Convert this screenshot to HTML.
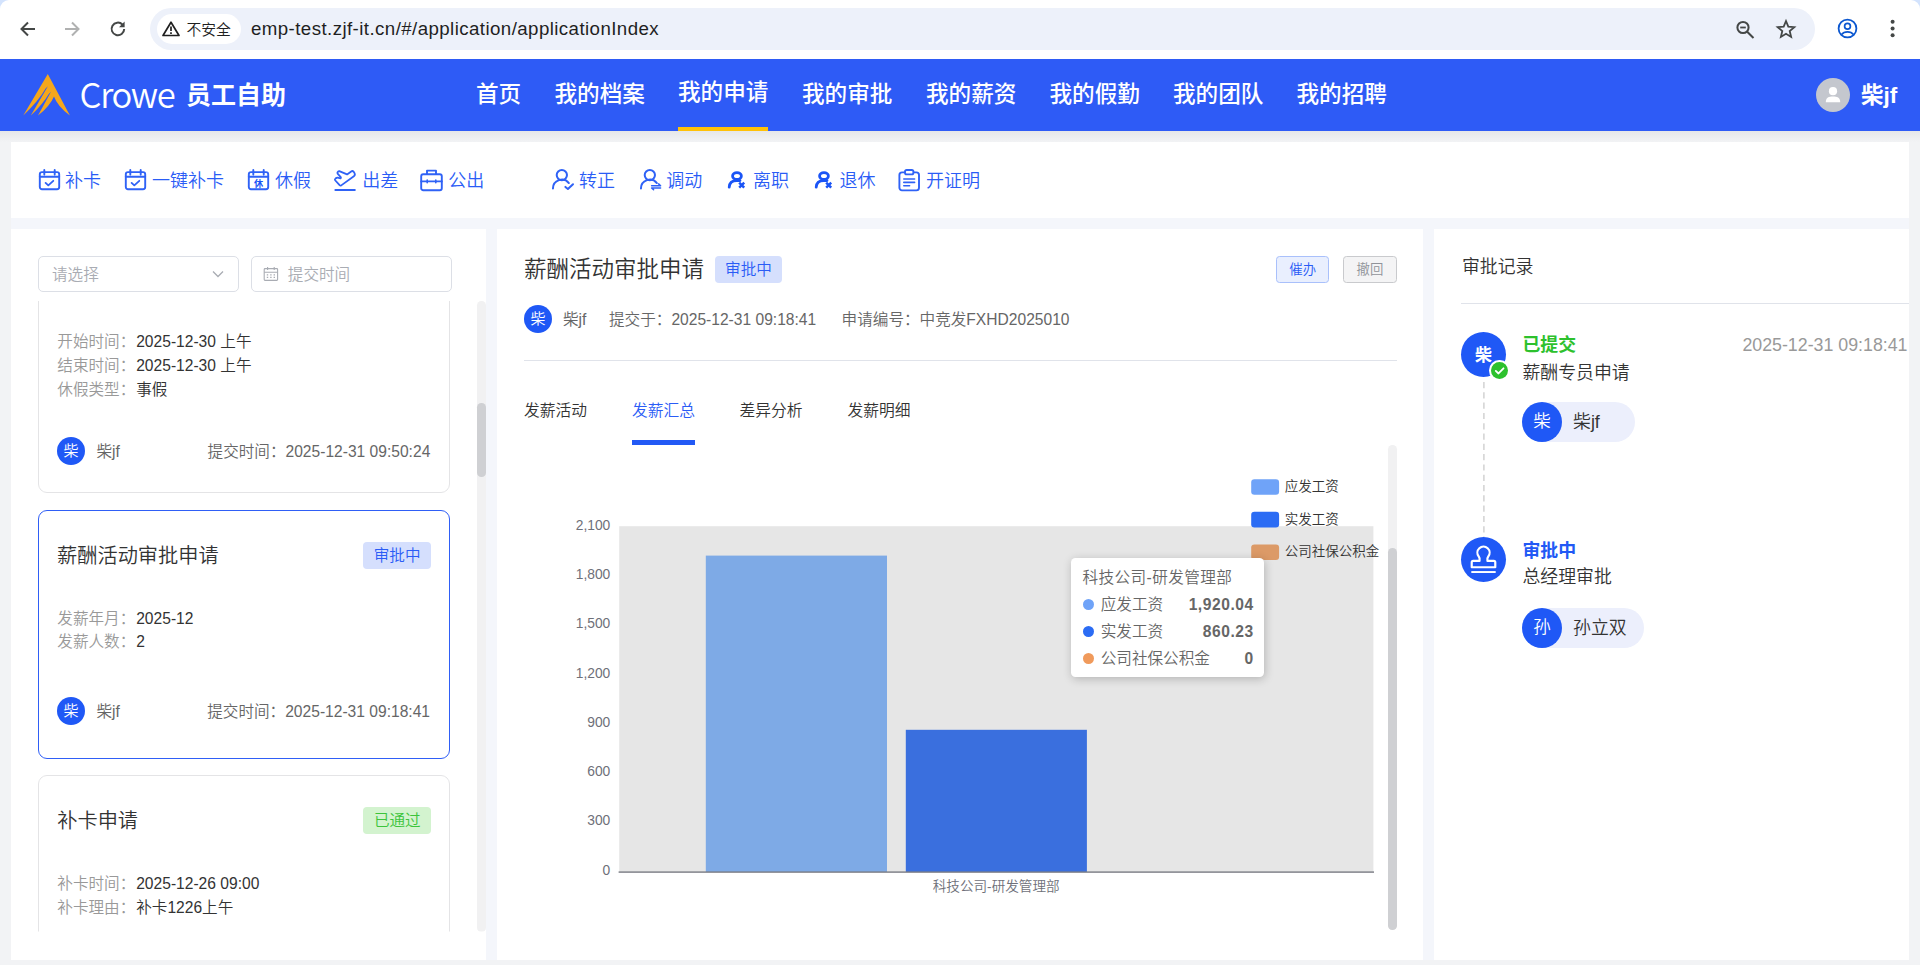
<!DOCTYPE html>
<html lang="zh-CN">
<head>
<meta charset="utf-8">
<title>员工自助</title>
<style>
*{box-sizing:border-box;margin:0;padding:0}
html,body{width:1920px;height:965px;overflow:hidden}
body{position:relative;background:#f2f3f5;font-family:"Liberation Sans","Noto Sans CJK SC",sans-serif;color:#333;font-size:15.6px;font-weight:350}
.abs{position:absolute}
.t{position:absolute;white-space:nowrap;line-height:1}
svg{position:absolute;overflow:visible}
/* browser chrome */
#chrome{position:absolute;left:0;top:0;width:1920px;height:59px;background:#fff;border-radius:9px 9px 0 0}
#urlbar{position:absolute;left:150px;top:8px;width:1665px;height:42px;border-radius:21px;background:#edf1fa}
#chip{position:absolute;left:157px;top:14px;width:84px;height:30px;border-radius:15px;background:#fff}
/* header */
#hdr{position:absolute;left:0;top:59px;width:1920px;height:72px;background:#2e5bf6}
#hdrshadow{position:absolute;left:0;top:131px;width:1920px;height:11px;background:linear-gradient(#e6e7e9,#f2f3f5)}
.nav{position:absolute;font-size:22.6px;color:#fff;white-space:nowrap;line-height:1;font-weight:500}
/* panels */
.panel{position:absolute;background:#fff}
.tool{position:absolute;top:171.6px;font-size:18px;color:#2a5cf6;line-height:1;white-space:nowrap}
.card{position:absolute;left:38px;width:412px;border:1px solid #e4e4e6;border-radius:9px;background:#fff}
.lbl{color:#999}
.g6{color:#666}
.av{position:absolute;border-radius:50%;background:#1f58f6;color:#fff;text-align:center}
.tag{position:absolute;border-radius:4px;text-align:center;font-size:15.6px}
</style>
</head>
<body>
<!-- ===== browser chrome ===== -->
<div class="abs" style="left:0;top:0;width:1920px;height:12px;background:#d3e3fd"></div>
<div id="chrome">
  <div id="urlbar"></div>
  <div id="chip"></div>
  <!-- back -->
  <svg style="left:19px;top:20px" width="18" height="18" viewBox="0 0 18 18"><path d="M16 9H3M9 2.5L2.5 9L9 15.5" fill="none" stroke="#444746" stroke-width="2" stroke-linejoin="miter"/></svg>
  <!-- forward -->
  <svg style="left:63px;top:20px" width="18" height="18" viewBox="0 0 18 18"><path d="M2 9H15M9 2.5L15.5 9L9 15.5" fill="none" stroke="#b0b1b1" stroke-width="2"/></svg>
  <!-- reload -->
  <svg style="left:108px;top:19px" width="20" height="20" viewBox="0 0 20 20"><path d="M16.2 10A6.3 6.3 0 1 1 14.4 5.5" fill="none" stroke="#444746" stroke-width="2"/><path d="M16.6 2.6V8.2H11z" fill="#444746"/></svg>
  <!-- warning -->
  <svg style="left:161px;top:20px" width="20" height="17" viewBox="0 0 20 17"><path d="M10 2.2L18 15.5H2z" fill="none" stroke="#1f1f1f" stroke-width="1.7" stroke-linejoin="round"/><path d="M10 6.5V11M10 12.3V14" stroke="#1f1f1f" stroke-width="1.7"/></svg>
  <div class="t" style="left:186.5px;top:23px;font-size:14.8px;color:#1f1f1f">不安全</div>
  <div class="t" id="url" style="left:251px;top:20px;font-size:18.7px;color:#1f1f1f;letter-spacing:0.42px">emp-test.zjf-it.cn/#/application/applicationIndex</div>
  <!-- zoom -->
  <svg style="left:1735px;top:19px" width="21" height="21" viewBox="0 0 21 21"><circle cx="8" cy="8.5" r="5.6" fill="none" stroke="#444746" stroke-width="2"/><path d="M12.2 12.7L18.5 19" stroke="#444746" stroke-width="2"/><path d="M5.2 8.5H10.8" stroke="#444746" stroke-width="1.8"/></svg>
  <!-- star -->
  <svg style="left:1775px;top:18px" width="22" height="22" viewBox="0 0 22 22"><path d="M11 3L13.3 8.6L19.3 9.1L14.7 13L16.1 18.9L11 15.7L5.9 18.9L7.3 13L2.7 9.1L8.7 8.6z" fill="none" stroke="#444746" stroke-width="1.8" stroke-linejoin="miter"/></svg>
  <!-- profile -->
  <svg style="left:1837px;top:18px" width="21" height="21" viewBox="0 0 21 21"><circle cx="10.5" cy="10.5" r="8.9" fill="none" stroke="#0b57d0" stroke-width="1.8"/><circle cx="10.5" cy="8.3" r="2.9" fill="none" stroke="#0b57d0" stroke-width="1.7"/><path d="M4.6 16.6C6 14.6 8 13.8 10.5 13.8S15 14.6 16.4 16.6" fill="none" stroke="#0b57d0" stroke-width="1.7"/></svg>
  <!-- kebab -->
  <svg style="left:1889px;top:18px" width="8" height="22" viewBox="0 0 8 22"><circle cx="3.6" cy="3.8" r="2" fill="#444746"/><circle cx="3.6" cy="10.6" r="2" fill="#444746"/><circle cx="3.6" cy="17.3" r="2" fill="#444746"/></svg>
</div>
<!-- ===== app header ===== -->
<div id="hdr"></div>
<div id="hdrshadow"></div>
<svg style="left:0;top:0" width="100" height="131" viewBox="0 0 100 131"><path d="M47.8 74.1L69.9 115.6Q57.3 106 54 96.5Q50 106 38 115.6L51 91.8L48.8 94Q42.8 104.2 30.8 115.6L47.9 86.2L45.6 88.6Q38.3 101.4 23.25 115.6Z" fill="#f5a71c"/></svg>
<div class="t" id="crowe" style="left:79.6px;top:75.5px;font-family:'Noto Sans CJK SC',sans-serif;font-weight:350;font-size:34.6px;color:#fff;letter-spacing:-1.35px">Crowe</div>
<div class="t" id="ygzz" style="left:186px;top:80.7px;font-family:'Noto Sans CJK SC',sans-serif;font-weight:700;font-size:25px;color:#fff">员工自助</div>
  <div class="nav" style="left:476px;top:83.6px">首页</div>
  <div class="nav" style="left:554.5px;top:83.6px">我的档案</div>
  <div class="nav" style="left:678px;top:82.3px">我的申请</div>
  <div class="nav" style="left:802px;top:83.6px">我的审批</div>
  <div class="nav" style="left:926px;top:83.6px">我的薪资</div>
  <div class="nav" style="left:1049.5px;top:83.6px">我的假勤</div>
  <div class="nav" style="left:1173px;top:83.6px">我的团队</div>
  <div class="nav" style="left:1296.5px;top:83.6px">我的招聘</div>
<div class="abs" style="left:678px;top:127px;width:90px;height:4px;background:#ffc107"></div>
<div class="abs" style="left:1816px;top:78px;width:34px;height:34px;border-radius:50%;background:#c4c7ce"></div>
<svg style="left:1816px;top:78px" width="34" height="34" viewBox="0 0 34 34"><circle cx="17" cy="13.2" r="4.1" fill="#fff"/><path d="M9.8 24.2C9.8 19.4 13 18.6 17 18.6S24.2 19.4 24.2 24.2z" fill="#fff"/></svg>
<div class="t" id="huser" style="left:1861px;top:84.6px;font-family:'Liberation Sans','Noto Sans CJK SC',sans-serif;font-weight:700;font-size:22.5px;color:#fff">柴jf</div>
<!-- ===== toolbar panel ===== -->
<div class="abs" style="left:11px;top:142px;width:1898px;height:818px;background:#f4f6fb"></div>
<div class="panel" id="toolbar" style="left:11px;top:142px;width:1898px;height:76px"></div>
<svg style="left:37.9px;top:169px" width="23" height="22" viewBox="0 0 23 22" fill="none" stroke="#2f62f6" stroke-width="1.9" stroke-linecap="round" stroke-linejoin="round"><rect x="1.8" y="3.1" width="19.4" height="17.1" rx="2.2"/><path d="M1.8 7.8H21.2M6.3 0.9V5.6M16.7 0.9V5.6"/><path d="M7.6 13.9l2.7 2.5 5-4.6" stroke-width="1.8"/></svg>
<svg style="left:124.4px;top:169px" width="23" height="22" viewBox="0 0 23 22" fill="none" stroke="#2f62f6" stroke-width="1.9" stroke-linecap="round" stroke-linejoin="round"><rect x="1.8" y="3.1" width="19.4" height="17.1" rx="2.2"/><path d="M1.8 7.8H21.2M6.3 0.9V5.6M16.7 0.9V5.6"/><path d="M7.6 13.9l2.7 2.5 5-4.6" stroke-width="1.8"/></svg>
<svg style="left:247px;top:169px" width="23" height="22" viewBox="0 0 23 22" fill="none" stroke="#2f62f6" stroke-width="1.9" stroke-linecap="round" stroke-linejoin="round"><rect x="1.8" y="3.1" width="19.4" height="17.1" rx="2.2"/><path d="M1.8 7.8H21.2M6.3 0.9V5.6M16.7 0.9V5.6"/><text x="11.5" y="17.6" font-size="9.2" font-weight="700" text-anchor="middle" fill="#1a54f6" stroke="none" font-family="Noto Sans CJK SC,sans-serif">休</text></svg>
<svg style="left:334px;top:169px" width="22" height="22" viewBox="0 0 22 22" fill="none" stroke="#2f62f6" stroke-width="1.9" stroke-linecap="round" stroke-linejoin="round"><path d="M5.27 2.13L13.06 5.44L17.2 2.46Q18.53 1.46 19.69 2.79L20.52 4.11Q21.51 5.94 19.85 7.26L7.26 16.38Q6.43 17.04 5.6 16.21L1.13 11.24Q0.46 10.25 1.62 9.42L2.62 8.92Q3.61 8.42 4.61 8.92L6.43 9.32Q7.26 8.92 6.76 8.09L3.61 4.61Q2.78 2.95 5.27 2.13Z" stroke-width="1.8"/><path d="M1.4 21H20.8" stroke-width="2"/></svg>
<svg style="left:420px;top:168.5px" width="23" height="23" viewBox="0 0 23 23" fill="none" stroke="#2f62f6" stroke-width="1.9" stroke-linecap="round" stroke-linejoin="round"><rect x="1.2" y="5.2" width="20.6" height="16" rx="2"/><path d="M7 5V1.6H16V5M1.2 12.4H21.8" /><path d="M7.2 11V13.8M15.8 11V13.8" stroke-width="1.6"/></svg>
<svg style="left:551px;top:168px" width="24" height="24" viewBox="0 0 24 24" fill="none" stroke="#2f62f6" stroke-width="2" stroke-linecap="round" stroke-linejoin="round"><circle cx="10.84" cy="7.1" r="5.14"/><path d="M1.95 20.5A8.9 8.9 0 0 1 17.87 15.06"/><path d="M14.4 18.9L16.9 21L22 16.2"/></svg>
<svg style="left:638.66px;top:168px" width="24" height="24" viewBox="0 0 24 24" fill="none" stroke="#2f62f6" stroke-width="2" stroke-linecap="round" stroke-linejoin="round"><circle cx="10.84" cy="7.1" r="5.14"/><path d="M1.95 20.5A8.9 8.9 0 0 1 17.87 15.06"/><path d="M12.6 17.8H21.6L19.6 15.9M21.6 19.9H12.6L14.6 21.8" stroke-width="1.5"/></svg>
<svg style="left:727px;top:170px" width="20" height="20" viewBox="0 0 20 20" fill="none" stroke="#1a54f6" stroke-width="2.8" stroke-linecap="round" stroke-linejoin="round"><ellipse cx="9.97" cy="5.93" rx="4.4" ry="3.4"/><path d="M2.2 17.2C2.4 13 4.6 10.6 9.6 10.6H13"/><path d="M12.2 12.7L17.2 17.7M17.2 12.7L12.2 17.7" stroke-width="2.5" stroke-linecap="butt"/></svg>
<svg style="left:813.9px;top:170px" width="20" height="20" viewBox="0 0 20 20" fill="none" stroke="#1a54f6" stroke-width="2.8" stroke-linecap="round" stroke-linejoin="round"><ellipse cx="9.97" cy="5.93" rx="4.4" ry="3.4"/><path d="M2.2 17.2C2.4 13 4.6 10.6 9.6 10.6H13"/><path d="M12.2 12.7L17.2 17.7M17.2 12.7L12.2 17.7" stroke-width="2.5" stroke-linecap="butt"/></svg>
<svg style="left:898.3px;top:169.2px" width="23" height="23" viewBox="0 0 23 23" fill="none" stroke="#2f62f6" stroke-width="1.9" stroke-linecap="round" stroke-linejoin="round"><rect x="1.4" y="3.4" width="19.6" height="18" rx="2.6"/><rect x="7" y="1" width="8.4" height="4.4" rx="1.6" fill="#fff"/><path d="M5.8 10H16.6M5.8 13.4H16.6M5.8 16.8H11.6" stroke-width="1.6"/></svg>
<div class="tool" style="left:65.0px">补卡</div>
<div class="tool" style="left:152.0px">一键补卡</div>
<div class="tool" style="left:275.0px">休假</div>
<div class="tool" style="left:362.2px">出差</div>
<div class="tool" style="left:448.2px">公出</div>
<div class="tool" style="left:579.0px">转正</div>
<div class="tool" style="left:666.3px">调动</div>
<div class="tool" style="left:753.0px">离职</div>
<div class="tool" style="left:839.4px">退休</div>
<div class="tool" style="left:926.0px">开证明</div>
<!-- ===== left panel ===== -->
<div class="panel" id="left" style="left:11px;top:229px;width:475px;height:731px"></div>
<div class="abs" style="left:38px;top:256px;width:200.8px;height:35.6px;border:1px solid #dcdfe6;border-radius:5px;background:#fff"></div>
<div class="t" style="left:52px;top:267.0px;color:#a9acb3;">请选择</div>
<svg style="left:211px;top:269.2px" width="14" height="10" viewBox="0 0 14 10"><path d="M2 2.5L7 7.5L12 2.5" fill="none" stroke="#a9acb3" stroke-width="1.3"/></svg>
<div class="abs" style="left:250.8px;top:256px;width:200.8px;height:35.6px;border:1px solid #dcdfe6;border-radius:5px;background:#fff"></div>
<svg style="left:263px;top:266px" width="16" height="16" viewBox="0 0 16 16" fill="none" stroke="#a9acb3" stroke-width="1.1"><rect x="1.2" y="2.6" width="13.4" height="11.8" rx="0.8"/><path d="M1.2 6.2H14.6M4.6 1V4M11.2 1V4"/><path d="M3.8 8.8H5.2M7.2 8.8H8.6M10.6 8.8H12M3.8 11.4H5.2M7.2 11.4H8.6M10.6 11.4H12" stroke-width="1.3"/></svg>
<div class="t" style="left:287.8px;top:267.0px;color:#a9acb3;">提交时间</div>
<div class="abs" id="list" style="left:0;top:300px;width:486px;height:631.5px;overflow:hidden;clip-path:inset(1px 0 0 0)">
<div class="card" style="top:-60px;height:252.5px"></div>
<div class="t lbl" style="left:57.3px;top:34.4px;">开始时间：</div>
<div class="t" style="left:136.2px;top:34.4px;">2025-12-30 上午</div>
<div class="t lbl" style="left:57.3px;top:58.1px;">结束时间：</div>
<div class="t" style="left:136.2px;top:58.1px;">2025-12-30 上午</div>
<div class="t lbl" style="left:57.3px;top:81.9px;">休假类型：</div>
<div class="t" style="left:136.2px;top:81.9px;">事假</div>
<div class="av" style="left:57.0px;top:137.0px;width:28px;height:28px;line-height:27px;font-size:15px">柴</div>
<div class="t g6" style="left:96.4px;top:143.7px;">柴jf</div>
<div class="t g6" style="right:55.7px;top:143.7px;">提交时间：2025-12-31 09:50:24</div>
<div class="card" style="top:210.2px;height:248.6px;border-color:#2f5ef6"></div>
<div class="t" style="left:57.1px;top:245.7px;font-size:20.2px;">薪酬活动审批申请</div>
<div class="tag" style="left:363.1px;top:241.8px;width:68px;height:27.2px;line-height:28.5px;background:#d5dffd;color:#2a5cf6">审批中</div>
<div class="t lbl" style="left:57.3px;top:311.2px;">发薪年月：</div>
<div class="t" style="left:136.2px;top:311.2px;">2025-12</div>
<div class="t lbl" style="left:57.3px;top:334.3px;">发薪人数：</div>
<div class="t" style="left:136.2px;top:334.3px;">2</div>
<div class="av" style="left:57.0px;top:397.0px;width:28px;height:28px;line-height:27px;font-size:15px">柴</div>
<div class="t g6" style="left:96.4px;top:403.7px;">柴jf</div>
<div class="t g6" style="right:56.0px;top:403.7px;">提交时间：2025-12-31 09:18:41</div>
<div class="card" style="top:475.3px;height:260px"></div>
<div class="t" style="left:57.3px;top:510.8px;font-size:20.2px;">补卡申请</div>
<div class="tag" style="left:363.3px;top:507.3px;width:68px;height:26.8px;line-height:28px;background:#d3f3cf;color:#3cc43c">已通过</div>
<div class="t lbl" style="left:57.3px;top:575.5px;">补卡时间：</div>
<div class="t" style="left:136.2px;top:575.5px;">2025-12-26 09:00</div>
<div class="t lbl" style="left:57.3px;top:600.1px;">补卡理由：</div>
<div class="t" style="left:136.2px;top:600.1px;">补卡1226上午</div>
<div class="abs" style="left:477px;top:1px;width:8.6px;height:630.5px;background:#f1f1f2;border-radius:4.3px"></div>
<div class="abs" style="left:477px;top:103px;width:8.6px;height:74px;background:#cfd0d3;border-radius:4.3px"></div>
</div>
<!-- ===== middle panel ===== -->
<div class="panel" id="mid" style="left:497px;top:229px;width:926px;height:731px"></div>
<div class="t" style="left:523.9px;top:258.6px;font-size:22.5px;">薪酬活动审批申请</div>
<div class="tag" style="left:715.3px;top:256.3px;width:66.4px;height:26.6px;line-height:28px;background:#d5dffd;color:#2a5cf6">审批中</div>
<div class="abs" style="left:1276.2px;top:256.2px;width:52.6px;height:26.6px;border:1px solid #a9c0fb;border-radius:3.5px;background:#e9effe"></div>
<div class="t" style="left:1289.3px;top:263.3px;font-size:13.4px;color:#2a5cf6;">催办</div>
<div class="abs" style="left:1343.2px;top:256.2px;width:53.6px;height:26.6px;border:1px solid #c9cacd;border-radius:3.5px;background:#f4f4f5"></div>
<div class="t" style="left:1356.6px;top:263.3px;font-size:13.4px;color:#909399;">撤回</div>
<div class="av" style="left:523.9px;top:304.8px;width:28px;height:28px;line-height:27px;font-size:15px">柴</div>
<div class="t g6" style="left:563px;top:311.5px;">柴jf</div>
<div class="t g6" style="left:609px;top:311.5px;">提交于：2025-12-31 09:18:41</div>
<div class="t g6" style="left:841.6px;top:311.5px;">申请编号：中竞发FXHD2025010</div>
<div class="abs" style="left:523.9px;top:360px;width:873px;height:1px;background:#e0e3ea"></div>
<div class="t" style="left:523.9px;top:403.3px;font-size:15.75px;color:#333;">发薪活动</div>
<div class="t" style="left:631.9px;top:403.3px;font-size:15.75px;color:#2a5cf6;">发薪汇总</div>
<div class="t" style="left:739.5px;top:403.3px;font-size:15.75px;color:#333;">差异分析</div>
<div class="t" style="left:847.6px;top:403.3px;font-size:15.75px;color:#333;">发薪明细</div>
<div class="abs" style="left:631.9px;top:440px;width:63.1px;height:4.8px;background:#2259f5"></div>
<svg id="chart" style="left:0;top:0" width="1920" height="965" viewBox="0 0 1920 965" font-family="Liberation Sans,Noto Sans CJK SC,sans-serif">
<rect x="619.2" y="526.2" width="754.2" height="345.8" fill="#e6e6e6"/>
<rect x="705.8" y="555.6" width="181.2" height="316.4" fill="#7eaae6"/>
<rect x="905.8" y="729.8" width="181.1" height="142.2" fill="#3a6fde"/>
<rect x="618.6" y="871.4" width="755.4" height="1.4" fill="#7a7c84"/>
<text x="610.3" y="529.9" text-anchor="end" font-size="13.8" fill="#6e7079">2,100</text>
<text x="610.3" y="579.2" text-anchor="end" font-size="13.8" fill="#6e7079">1,800</text>
<text x="610.3" y="628.4" text-anchor="end" font-size="13.8" fill="#6e7079">1,500</text>
<text x="610.3" y="677.7" text-anchor="end" font-size="13.8" fill="#6e7079">1,200</text>
<text x="610.3" y="726.9" text-anchor="end" font-size="13.8" fill="#6e7079">900</text>
<text x="610.3" y="776.2" text-anchor="end" font-size="13.8" fill="#6e7079">600</text>
<text x="610.3" y="825.4" text-anchor="end" font-size="13.8" fill="#6e7079">300</text>
<text x="610.3" y="874.7" text-anchor="end" font-size="13.8" fill="#6e7079">0</text>
<text x="996.2" y="891.4" text-anchor="middle" font-size="13.6" fill="#6e7079">科技公司-研发管理部</text>
<rect x="1251.2" y="479.2" width="27.9" height="15.6" rx="3.2" fill="#6fa3f8"/>
<text x="1284.8" y="491.2" font-size="13.5" fill="#333">应发工资</text>
<rect x="1251.2" y="511.8" width="27.9" height="15.6" rx="3.2" fill="#2b6cf4"/>
<text x="1284.8" y="523.8" font-size="13.5" fill="#333">实发工资</text>
<rect x="1251.2" y="544.4" width="27.9" height="15.6" rx="3.2" fill="#dc9a67"/>
<text x="1284.8" y="556.4" font-size="13.5" fill="#333">公司社保公积金</text>
</svg>
<div class="abs" style="left:1071.4px;top:557.8px;width:192.8px;height:119.2px;background:#fff;border-radius:4.5px;box-shadow:1px 2px 10px rgba(0,0,0,.22)"></div>
<div class="t g6" style="left:1082.6px;top:570.1px;letter-spacing:0.4px">科技公司-研发管理部</div>
<div class="abs" style="left:1082.6px;top:598.5px;width:11.6px;height:11.6px;border-radius:50%;background:#6fa3f8"></div>
<div class="t g6" style="left:1100.7px;top:597.0px;">应发工资</div>
<div class="t g6" style="right:666.8px;top:597.4px;font-weight:700;letter-spacing:0.55px;margin-right:-0.55px;">1,920.04</div>
<div class="abs" style="left:1082.6px;top:625.5px;width:11.6px;height:11.6px;border-radius:50%;background:#2b6cf4"></div>
<div class="t g6" style="left:1100.7px;top:624.0px;">实发工资</div>
<div class="t g6" style="right:666.8px;top:624.4px;font-weight:700;letter-spacing:0.55px;margin-right:-0.55px;">860.23</div>
<div class="abs" style="left:1082.6px;top:652.5px;width:11.6px;height:11.6px;border-radius:50%;background:#f09a5b"></div>
<div class="t g6" style="left:1100.7px;top:651.0px;">公司社保公积金</div>
<div class="t g6" style="right:666.8px;top:651.4px;font-weight:700;letter-spacing:0.55px;margin-right:-0.55px;">0</div>
<div class="abs" style="left:1388px;top:444.5px;width:8.8px;height:485px;background:#f1f1f2;border-radius:4.4px"></div>
<div class="abs" style="left:1388px;top:547.5px;width:8.8px;height:382px;background:#cfd0d3;border-radius:4.4px"></div>
<!-- ===== right panel ===== -->
<div class="panel" id="right" style="left:1434px;top:229px;width:475px;height:731px"></div>
<div class="t" style="left:1461.9px;top:258.7px;font-size:17.9px;">审批记录</div>
<div class="abs" style="left:1461.2px;top:303px;width:447.8px;height:1px;background:#e0e3ea"></div>
<svg style="left:1480px;top:380px" width="8" height="160" viewBox="0 0 8 160"><path d="M3.9 2V157" stroke="#cfcfcf" stroke-width="1.4" stroke-dasharray="6.2 4.1"/></svg>
<div class="av" style="left:1461.1px;top:331.9px;width:45px;height:45px;line-height:47px;font-size:17px;font-weight:700;">柴</div>
<div class="abs" style="left:1489.2px;top:360.3px;width:20.4px;height:20.4px;border-radius:50%;background:#fff"></div>
<div class="abs" style="left:1490.8px;top:361.9px;width:17.2px;height:17.2px;border-radius:50%;background:#2dc12d"></div>
<svg style="left:1490.8px;top:361.9px" width="17.2" height="17.2" viewBox="0 0 17.2 17.2"><path d="M4.8 8.9L7.5 11.5L12.5 6.3" fill="none" stroke="#fff" stroke-width="1.8" stroke-linecap="round" stroke-linejoin="round"/></svg>
<div class="t" style="left:1522.4px;top:337.1px;font-size:17.9px;font-weight:700;color:#2dc12d;">已提交</div>
<div class="t" style="right:12.5px;top:337.0px;font-size:17.8px;color:#999;">2025-12-31 09:18:41</div>
<div class="t" style="left:1522.4px;top:365.0px;font-size:17.9px;">薪酬专员申请</div>
<div class="abs" style="left:1521.9px;top:401.9px;width:113.2px;height:40.2px;border-radius:20.1px;background:#eceffc"></div>
<div class="av" style="left:1521.9px;top:402.0px;width:40px;height:40px;line-height:39px;font-size:17.5px;">柴</div>
<div class="t" style="left:1573px;top:413.6px;font-size:17.9px;">柴jf</div>
<div class="av" style="left:1461.1px;top:537.0px;width:45px;height:45px;line-height:44px;font-size:18px;"></div>
<svg style="left:1468.1px;top:545.6px" width="31" height="31" viewBox="0 0 30 30" fill="none" stroke="#fff" stroke-width="2.1"><path d="M11.2 14.4C11.5 12.4 11.6 11.6 10.4 10.2A5.9 5.9 0 1 1 19.6 10.2C18.4 11.6 18.5 12.4 18.8 14.4H25Q26.4 14.4 26.4 15.8V20.6H3.6V15.8Q3.6 14.4 5 14.4z" stroke-linejoin="round"/><path d="M3.2 25.2H26.8" stroke-width="1.9"/></svg>
<div class="t" style="left:1522.4px;top:542.6px;font-size:17.9px;font-weight:700;color:#2259f5;">审批中</div>
<div class="t" style="left:1522.4px;top:569.4px;font-size:17.9px;">总经理审批</div>
<div class="abs" style="left:1521.9px;top:607.9px;width:122px;height:40px;border-radius:20px;background:#eceffc"></div>
<div class="av" style="left:1521.9px;top:607.9px;width:40px;height:40px;line-height:39px;font-size:17.5px;">孙</div>
<div class="t" style="left:1573px;top:619.5px;font-size:17.9px;">孙立双</div>
</body>
</html>
